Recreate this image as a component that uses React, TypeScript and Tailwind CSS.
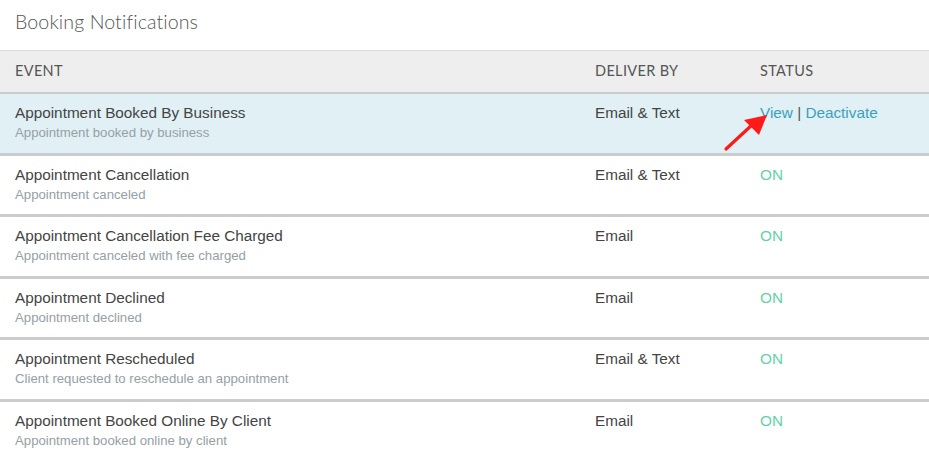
import React from 'react'

const rows = [
    { title: 'Appointment Booked By Business', sub: 'Appointment booked by business', by: 'Email & Text', active: true },
    { title: 'Appointment Cancellation', sub: 'Appointment canceled', by: 'Email & Text' },
    { title: 'Appointment Cancellation Fee Charged', sub: 'Appointment canceled with fee charged', by: 'Email' },
    { title: 'Appointment Declined', sub: 'Appointment declined', by: 'Email' },
    { title: 'Appointment Rescheduled', sub: 'Client requested to reschedule an appointment', by: 'Email & Text' },
    { title: 'Appointment Booked Online By Client', sub: 'Appointment booked online by client', by: 'Email' },
];

export default function App() {
    return (
        <div className="w-[929px] h-[458px] overflow-hidden bg-white font-['Liberation_Sans',Arial,sans-serif]">
            {/* Title */}
            <div className="h-[50px] pl-[15px] pt-[7px] text-[19.6px] font-light text-[#555] font-['Lato',sans-serif] tracking-[0.1px]">
                Booking Notifications
            </div>

            {/* Table header */}
            <div className="grid grid-cols-[595px_165px_1fr] h-[44px] items-center bg-[#eeeeee] border-t border-[#dddddd] border-b-[2px] border-b-[#cccccc] text-[14.5px] text-[#555] font-['Lato',sans-serif] uppercase tracking-[0.35px]">
                <div className="pl-[15px] pb-[1px]">Event</div>
                <div className="pb-[1px]">Deliver By</div>
                <div className="pb-[1px]">Status</div>
            </div>

            {/* Rows */}
            {rows.map((row, i) => (
                <div
                    key={i}
                    className={`relative grid grid-cols-[595px_165px_1fr] h-[61.6px] border-b-[3px] border-[#cccccc] ${row.active ? 'bg-[#e1f0f4]' : 'bg-white'}`}
                >
                    <div className="pl-[15px] pt-[10px]">
                        <div className="text-[15.3px] leading-[18px] text-[#444]">{row.title}</div>
                        <div className="text-[13.2px] leading-[15px] mt-[3px] text-[#95a0a6]">{row.sub}</div>
                    </div>
                    <div className="pt-[10px] text-[15.3px] leading-[18px] text-[#444]">{row.by}</div>
                    <div className="pt-[10px] text-[15.3px] leading-[18px]">
                        {row.active ? (
                            <span>
                                <span className="text-[#3aa0c0]">View</span>
                                <span className="text-[#555]"> | </span>
                                <span className="text-[#3aa0c0]">Deactivate</span>
                            </span>
                        ) : (
                            <span className="text-[#5fd3a8]">ON</span>
                        )}
                    </div>

                    {row.active && (
                        <svg className="absolute left-[720px] top-[16px]" width="52" height="42" viewBox="0 0 52 42">
                            <path d="M6 39 L33 14" stroke="#ff1a1a" strokeWidth="3.2" strokeLinecap="round" />
                            <path d="M47 5 L24 10 L39 25 Z" fill="#ff1a1a" />
                        </svg>
                    )}
                </div>
            ))}
        </div>
    );
}
